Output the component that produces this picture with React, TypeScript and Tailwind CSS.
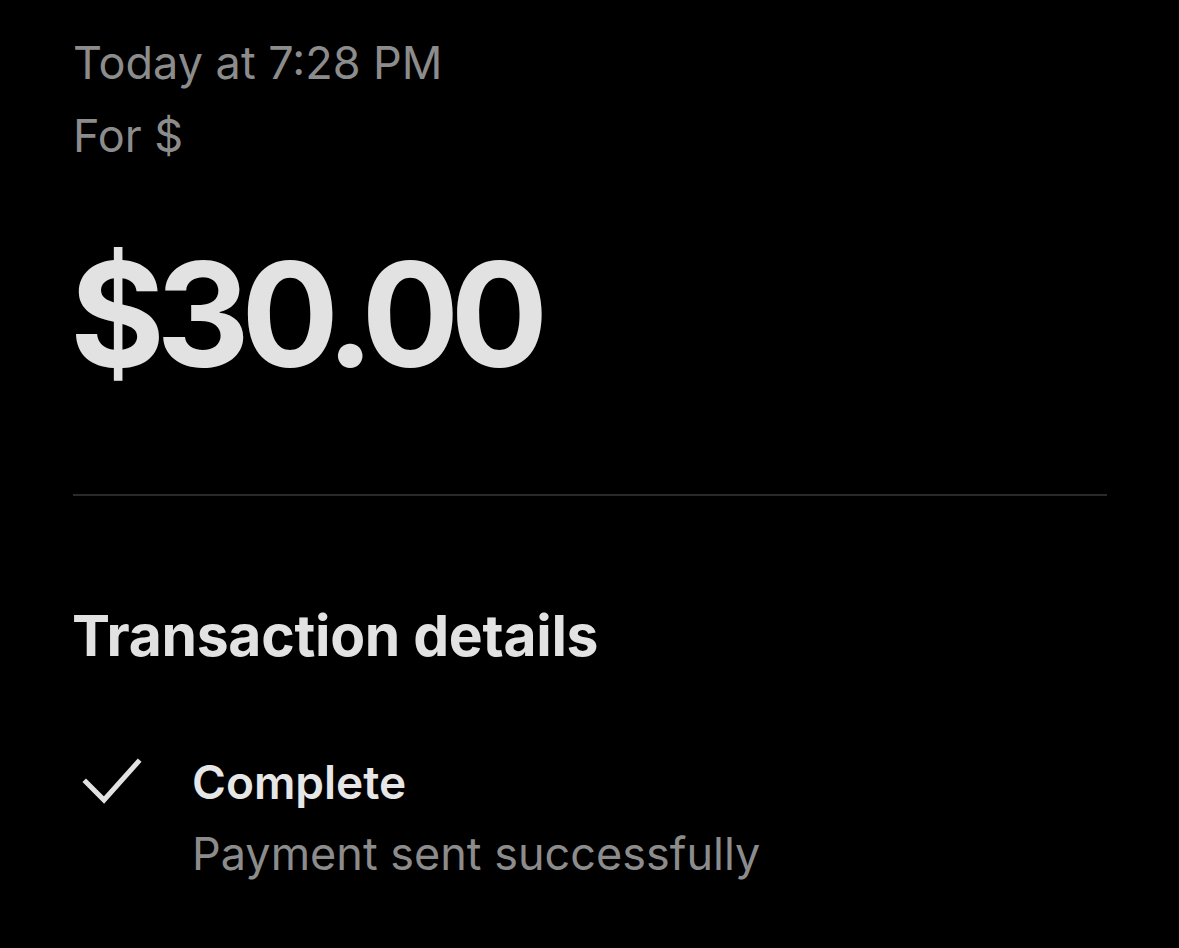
export default function App() {
  return (
    <div
      className="min-h-[948px] w-full bg-black pl-[73px] pr-[72px] pt-[26px]"
      style={{ fontFamily: 'Inter, "Liberation Sans", sans-serif' }}
    >
      <div className="text-[45px] leading-[73px] text-[#8c8c8c]">
        <p>Today at 7:28 PM</p>
        <p>For $</p>
      </div>

      <h1 className="mt-[63px] -ml-[3px] text-[145px] font-bold leading-[160px] tracking-[-0.06em] text-[#e2e2e2]">
        $30.00
      </h1>

      <div className="mt-[99px] h-[2px] bg-[#2a2a2a]" />

      <h2 className="mt-[100px] -ml-[1px] text-[57px] font-bold leading-[80px] tracking-[-0.005em] text-[#e2e2e2]">
        Transaction details
      </h2>

      <div className="mt-[70px] flex gap-[50px]">
        <svg
          viewBox="0 0 60 46"
          className="ml-[9px] mt-[12px] h-[46px] w-[60px] shrink-0"
          fill="none"
          stroke="#e2e2e2"
          strokeWidth="5"
          strokeLinecap="square"
        >
          <path d="M4 24 L22 42 L56 4" />
        </svg>
        <div className="leading-[72px]">
          <p className="text-[46px] font-semibold text-[#e6e6e6]">Complete</p>
          <p className="text-[45px] text-[#8c8c8c]">Payment sent successfully</p>
        </div>
      </div>
    </div>
  )
}
